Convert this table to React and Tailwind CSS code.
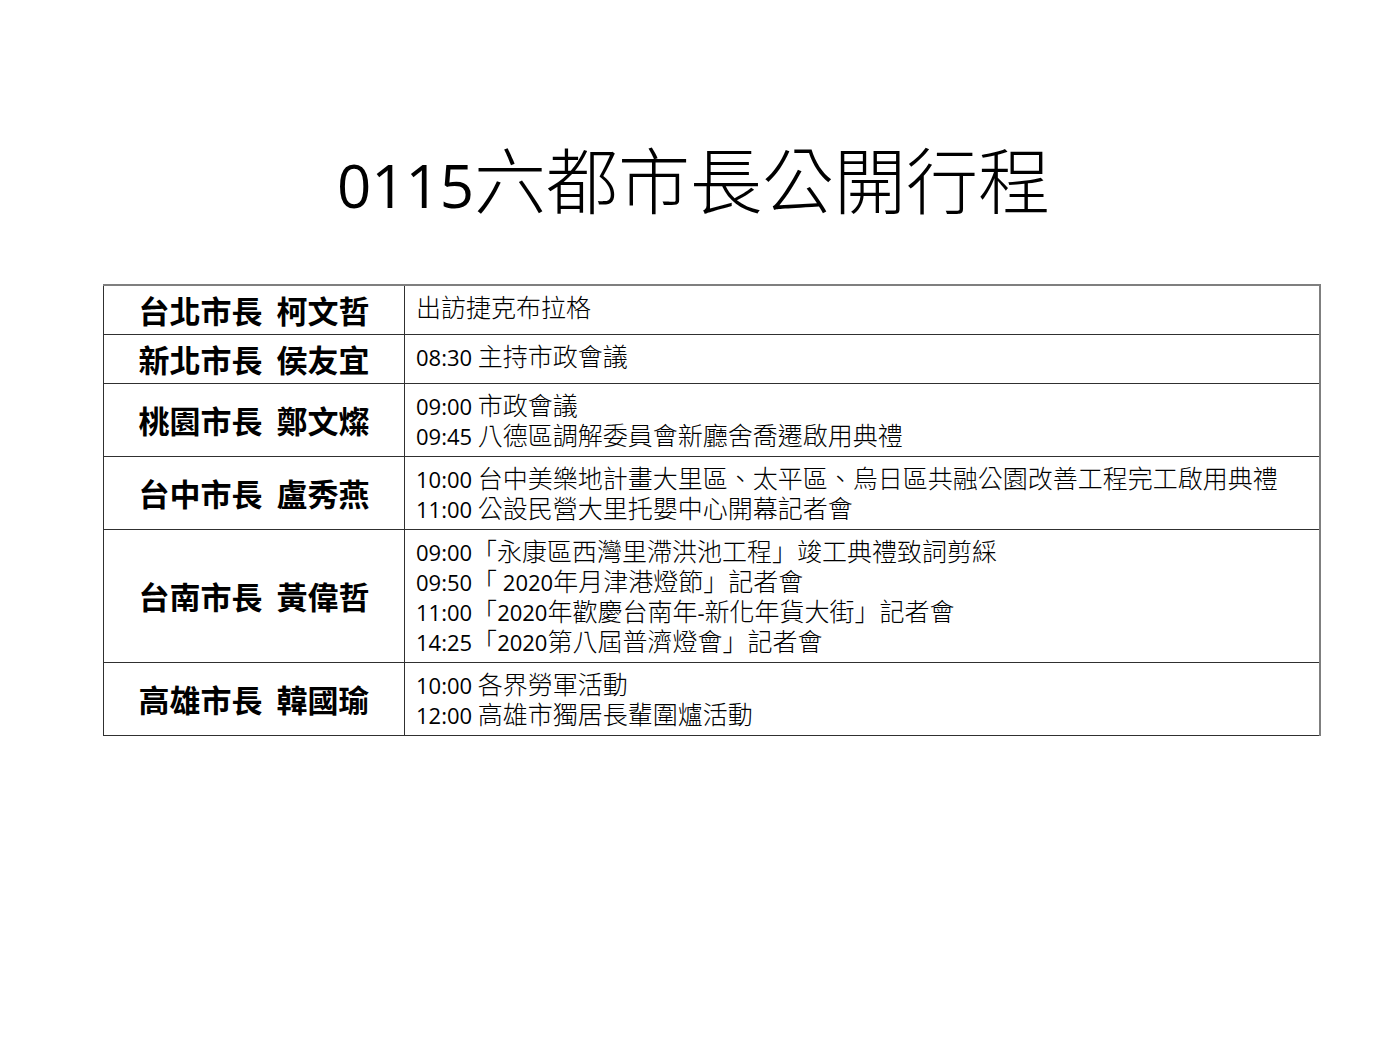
const rows = [
  { name: "台北市長  柯文哲", items: ["出訪捷克布拉格"] },
  { name: "新北市長  侯友宜", items: ["08:30 主持市政會議"] },
  { name: "桃園市長  鄭文燦", items: ["09:00 市政會議", "09:45 八德區調解委員會新廳舍喬遷啟用典禮"] },
  {
    name: "台中市長  盧秀燕",
    items: [
      "10:00 台中美樂地計畫大里區、太平區、烏日區共融公園改善工程完工啟用典禮",
      "11:00 公設民營大里托嬰中心開幕記者會",
    ],
  },
  {
    name: "台南市長  黃偉哲",
    items: [
      "09:00「永康區西灣里滯洪池工程」竣工典禮致詞剪綵",
      "09:50「 2020年月津港燈節」記者會",
      "11:00「2020年歡慶台南年-新化年貨大街」記者會",
      "14:25「2020第八屆普濟燈會」記者會",
    ],
  },
  { name: "高雄市長  韓國瑜", items: ["10:00 各界勞軍活動", "12:00 高雄市獨居長輩圍爐活動"] },
];

// ascii runs get the latin font, the rest falls to the CJK face
const Line = ({ text }) => {
  const parts = text.split(/([\x00-\x7F]+)/).filter(Boolean);
  return (
    <div className="h-[30px] flex items-baseline whitespace-pre leading-[30px]">
      {parts.map((p, i) =>
        /^[\x00-\x7F]+$/.test(p) ? (
          <span key={i} className="font-['Open_Sans'] font-normal text-[22px]">
            {p}
          </span>
        ) : (
          <span key={i}>{p}</span>
        )
      )}
    </div>
  );
};

export default function App() {
  return (
    <div className="w-[1387px] h-[1040px] bg-white text-black font-['Noto_Sans_CJK_TC',sans-serif]">
      <div className="pt-[137px] h-[284px] flex justify-center items-baseline leading-[80px]">
        <span className="font-['Open_Sans'] text-[60px]">0115</span>
        <span className="text-[72px] font-light">六都市長公開行程</span>
      </div>

      <div className="pl-[103px]">
        <table className="w-[1218px] border-collapse border-t-2 border-r-2 border-t-[#7f7f7f] border-r-[#7f7f7f]">
          <tbody>
            {rows.map((r) => (
              <tr key={r.name} className="h-[49px]">
                <td className="w-[301px] border border-[#303030] text-center align-middle font-bold text-[31px] whitespace-pre leading-none">
                  {r.name}
                </td>
                <td className="border border-[#303030] align-top pl-[11px] pt-[5px] pb-[7px] text-[25px] font-light">
                  {r.items.map((t) => (
                    <Line key={t} text={t} />
                  ))}
                </td>
              </tr>
            ))}
          </tbody>
        </table>
      </div>
    </div>
  );
}
